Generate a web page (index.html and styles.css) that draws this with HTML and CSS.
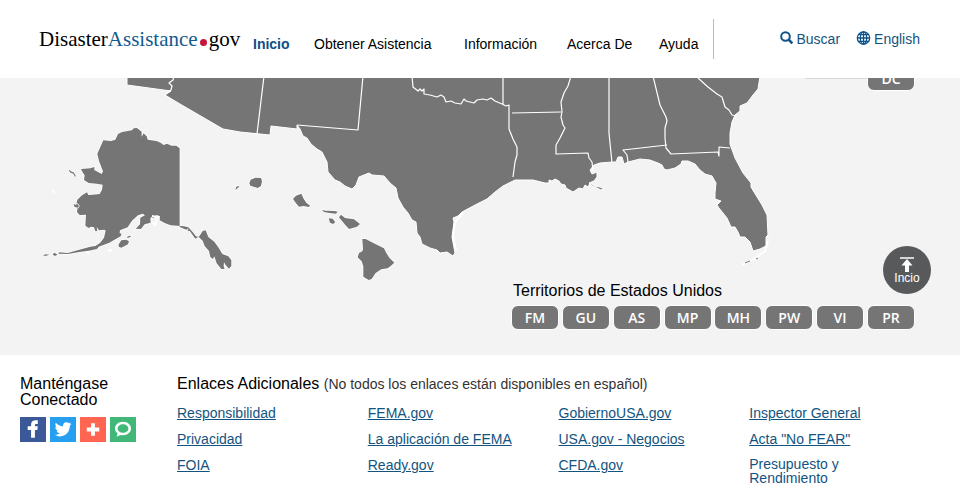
FILE: index.html
```html
<!DOCTYPE html>
<html lang="es">
<head>
<meta charset="utf-8">
<meta name="viewport" content="width=device-width, initial-scale=1">
<title>DisasterAssistance.gov</title>
<link rel="stylesheet" href="styles.css">
</head>
<body>
<header class="site-header">
  <a class="logo" href="#">Disaster<span class="logo-accent">Assistance</span><span class="logo-dot"></span>gov</a>
  <nav class="main-nav">
    <a class="current" href="#">Inicio</a>
    <a href="#">Obtener Asistencia</a>
    <a href="#">Información</a>
    <a href="#">Acerca De</a>
    <a href="#">Ayuda</a>
  </nav>
  <div class="tools">
    <a href="#"><svg width="14" height="14" viewBox="0 0 14 14"><circle cx="5.5" cy="5.5" r="4.3" fill="none" stroke="currentColor" stroke-width="2"/><path d="M8.7 8.7l3.6 3.6" stroke="currentColor" stroke-width="2.6"/></svg>Buscar</a>
    <a href="#"><svg width="15" height="14" viewBox="0 0 15 14"><g fill="none" stroke="currentColor" stroke-width="1.3"><circle cx="7.5" cy="7" r="6.2"/><ellipse cx="7.5" cy="7" rx="3.2" ry="6.2"/><path d="M7.5 .8v12.4M1.3 7h12.4M2.3 3.7h10.4M2.3 10.3h10.4"/></g></svg>English</a>
  </div>
</header>

<main class="map">
  <svg class="map-art" viewBox="0 78 960 277" role="img" aria-label="Mapa">
    <g class="land">
      <path d="M127 70V85L171 91 165 95 180 104 223 129 240 132 270 135 271 126 297 129 297 125 300 129 303 136 307 138 311 144 317 149 322 152 327 162 328 172 335 180 340 182 345 186 352 189 356 185 359 177 364 175 369 173 372 175 384 176 390 183 396 188 398 198 403 207 408 213 412 220 416 222 417 233 420 237 422 244 430 248 437 250 440 253 447 252 453 256 455 253 452 237 454 222 453 218 458 216 462 212 477 204 487 199 495 192 503 186 515 180 533 180 545 183 549 183 549 180 552 181 555 179 559 181 561 184 565 185 566 188 573 192 579 188 583 189 585 185 588 187 590 183 594 186 600 187 604 189 601 190 597 188 592 186 589 183 594 181 597 177 597 172 592 174 590 170 594 165 600 163 612 162 616 162 618 157 622 157 624 164 628 162 640 159 650 160 658 163 662 165 664 169 667 170 675 168 681 164 682 161 688 161 695 164 700 170 705 174 712 176 716 183 715 193 715 199 721 201 717 205 719 208 727 218 731 227 735 227 738 232 740 237 745 237 750 242 753 251 760 249 766 246 766 237 768 235 767 215 762 205 754 192 751 187 751 183 743 173 735 158 730 144 730 133 732 122 735 115 740 111 740 106 747 103 753 95 758 89 761 70Z"/>
      <g transform="translate(30 120) scale(.3333)">
        <path d="M220 61l23 2 13-4 8-17 12-6 30-5 5-6 10-1 14 11v15l6-10 10 10 2 9 27 4 13 6 8 6 10-4 14 6h14l10 8v236l20 8 6-4-2 9 6-2 17 24 12-7 10-16 9-2 8 20 18 14 12 17 12 20 18 7 9 11v18l-7 8-10-11-5-8-1 12 3 8h-10l-14-17-7-21-4 8-8-6-4-18-13-15-6-16-12-11-8-2-10-13-13-14-13-3-40-3-18-7-15-8 1-12-10-4-9 9-7-3-3 5 1 12-18 5-11 14-16-1 13-13 1-20 14-7-7-5-14 5-18 16-13 20-23 9-1 9 6 1-3 8-34 19-32 12-5 7-25 5-28 4-35 6-28-1 2-4 26 2 43-12 25-7 15-2 14-9 12-16 5-21-4-3-16 2-7-10 2 12-6 1-4-12-9-2-7 4-10-7 2-33-19 1-8-9 2-15-5-5 4-17 14-13 15-9 4 8 13-1 21-2 7-13 2-15-18-3-24-2-14-9 2-14-7-11-4-8 28-2 12-4v9l22 12 4-8-7-18-5-13-5-22z"/>
        <path d="M266 373l8-12 15-2 8 5-3 9-10 5-10 5-8-3zM290 352l8-5 6 2-10 5zM130 253l8 1 3-3 6 6-3 6-10-2zM117 149l8 6 6 2 7 12-3 1-5-9-8-3-5-5zM38 407l8-4 13 1-10 3zM68 403l5-5 10 6-9 4z"/>
      </g>
      <g transform="translate(220 160) scale(.3333)">
        <path d="M88 70l4-11 14-6 17 1 3 10-3 14-10 6-22-7zM46 90l3-10 10-3-6 8zM219 117l9-10 16-6 7 15 8 12 11 9-3 4-16-3-14 2-10-12zM305 150l12 2 26 1 10 2-5 6-20-2-16-3zM326 175l12 1 8 11-7 5-9-4zM357 172l6-8 12 10 27 4 18 14-9 8-24 7-13-14zM427 237l10 0 23 12 32 16 7 14 9 14 15 15-10 9-10 8-19 3-17 11-12 18-9 3-16-10v-31l-5-15-12-12 4-13 10-5 2-7z"/>
      </g>
    </g>
    <g class="shore">
      <path d="M463 213l-8 9-2 14 3 14M768 241l-3 10-11 8-12 6M53 190l1 3M86 252l4 1M108 251l4-1M152 216l6 1-3 8-3-3"/>
    </g>
    <path class="keys" d="M745 263l5-2M756 259l2-1"/>
    <g class="borders">
      <path d="M174 76l-1 4-4 3 3 3-1 4-4 3M264 76l-7 58M363 76l-5 54-61-5M412 76l1 11 5 4 2-2 2 2 2-2v5l6 1 7 2 4-2 3 2 2 5 5-1 4 2 6 1 3-5 2 2 8 2 3-3 6-1 4 1 4-2 4 3 7 3 4 2 3-1v24l4 10 4 8v8l-2 7-2 15M503 76v29M512 113l49-1M571 76l-3 10-4 7-3 9 1 10-1 5 2 8 2 3-5 10-4 7v9l32-1 1 5 3 4 1 9M609 76v57l3 30M628 162l-1-7-4-5 44-5M653 76l7 29 6 12 1 4-2 7v10l1 10 5 6 47-2 1 4v-9l11 1M698 78l10 9 9 7 5 3 3 10 4 3 3 5 4 1"/>
    </g>
    <path class="leader" d="M805 78h63"/>
  </svg>
  <button class="state-pill dc" type="button">DC</button>
  <a class="to-top" href="#"><svg width="16" height="16" viewBox="0 0 16 16"><path d="M1 1h14" stroke="currentColor" stroke-width="1.5"/><path d="M8 2l5.5 6.5H10V15H6V8.5H2.5z" fill="currentColor"/></svg>Incio</a>
  <section class="territories">
    <h2>Territorios de Estados Unidos</h2>
    <div class="pill-row">
      <button class="state-pill" type="button">FM</button>
      <button class="state-pill" type="button">GU</button>
      <button class="state-pill" type="button">AS</button>
      <button class="state-pill" type="button">MP</button>
      <button class="state-pill" type="button">MH</button>
      <button class="state-pill" type="button">PW</button>
      <button class="state-pill" type="button">VI</button>
      <button class="state-pill" type="button">PR</button>
    </div>
  </section>
</main>

<footer class="site-footer">
  <section class="connect">
    <h2>Manténgase Conectado</h2>
    <div class="social">
      <a class="facebook" href="#" aria-label="Facebook"><svg viewBox="0 0 26 26"><path d="M11 21.500v-8H7.500v-4H11V8c0-3.200 2-4.500 5-4.500h2V7.300h-1.500c-1.200 0-1.500.5-1.500 1.500v.7h3l-.5 4H15v8z"/></svg></a>
      <a class="twitter" href="#" aria-label="Twitter"><svg viewBox="0 0 26 26"><path d="M4.500 18.300c2 .2 3.700-.3 5.200-1.500-1.700-.1-2.900-1-3.400-2.500h1.500C6 13.700 5 12.300 5 10.500l1.600.4C5 9.600 4.600 7.700 5.600 6c2 2.300 4.400 3.600 7.500 3.800C12.600 7.200 14.300 5.500 16.500 5.500c1.100 0 2 .4 2.700 1.100l2.300-.9-1.600 2 2.100-.5-1.900 2c.1 6-4.300 11-10.100 11-2 0-4-.6-5.500-1.900z"/></svg></a>
      <a class="share" href="#" aria-label="Compartir"><svg viewBox="0 0 26 26"><path d="M11 6.500h4V11h4.500v4H15v4.500h-4V15H6.500v-4H11z"/></svg></a>
      <a class="chat" href="#" aria-label="Comentarios"><svg viewBox="0 0 26 26"><path fill-rule="evenodd" d="M13 5c4.700 0 8.300 3 8.300 7s-3.600 7-8.300 7c-1 0-2-.1-2.800-.4L6.500 20.500l.8-3.500c-1.700-1.200-2.600-3-2.600-5 0-4 3.600-7 8.300-7zm0 2.500c-3.200 0-5.600 2-5.600 4.500s2.400 4.500 5.600 4.500 5.600-2 5.600-4.500-2.400-4.500-5.600-4.500z"/></svg></a>
    </div>
  </section>
  <section class="links">
    <h2>Enlaces Adicionales <small>(No todos los enlaces están disponibles en español)</small></h2>
    <ul>
      <li><a href="#">Responsibilidad</a></li>
      <li><a href="#">FEMA.gov</a></li>
      <li><a href="#">GobiernoUSA.gov</a></li>
      <li><a href="#">Inspector General</a></li>
      <li><a href="#">Privacidad</a></li>
      <li><a href="#">La aplicación de FEMA</a></li>
      <li><a href="#">USA.gov - Negocios</a></li>
      <li><a href="#">Acta "No FEAR"</a></li>
      <li><a href="#">FOIA</a></li>
      <li><a href="#">Ready.gov</a></li>
      <li><a href="#">CFDA.gov</a></li>
      <li><a class="plain" href="#">Presupuesto y<br>Rendimiento</a></li>
    </ul>
  </section>
</footer>
</body>
</html>
```

FILE: styles.css
```css
* {
  box-sizing: border-box;
}

body {
  margin: 0;
  background: #fff;
  color: #000;
  font: 14px/16px "Liberation Sans", Arial, sans-serif;
}

h2 {
  margin: 0;
  font-size: 16px;
  font-weight: 400;
}

a {
  color: #12547f;
  text-decoration: none;
}

.site-header {
  display: flex;
  align-items: flex-start;
  padding: 19px 40px 19px 39px;
  background: #fff;
  position: relative;
  z-index: 1;
}

.logo {
  width: 214px;
  padding-top: 8px;
  color: #000;
  font: 21px/24px "Liberation Serif", "Times New Roman", serif;
  white-space: nowrap;
}

.logo-accent {
  color: #125a8f;
}

.logo-dot {
  display: inline-block;
  width: 7px;
  height: 7px;
  margin: 0 2px;
  border-radius: 50%;
  background: #c8143c;
}

.main-nav {
  display: grid;
  grid-template-columns: 61px 150px 103px 92px 54px;
  height: 40px;
  padding-top: 17px;
  border-right: 1px solid #bbb;
  white-space: nowrap;
}

.main-nav a {
  color: #000;
}

.main-nav .current {
  color: #0f4f84;
  font-weight: 700;
}

.tools {
  display: flex;
  gap: 16px;
  margin-left: auto;
  padding-top: 12px;
}

.tools a {
  display: flex;
  gap: 3px;
}

.tools svg {
  color: #0f5488;
}

.map {
  position: relative;
  overflow: hidden;
  background: #f3f3f3;
}

.map-art {
  display: block;
  width: 100%;
}

.land {
  fill: #757575;
  stroke: #fff;
  stroke-width: 1;
  stroke-linejoin: round;
}

.land g {
  stroke-width: 4;
  paint-order: stroke;
}

.shore {
  fill: none;
  stroke: #fff;
  stroke-width: 2;
}

.keys {
  stroke: #757575;
}

.borders {
  fill: none;
  stroke: #fff;
  stroke-width: 1.2;
  stroke-linejoin: round;
}

.leader {
  stroke: #bbb;
}

.state-pill {
  width: 48px;
  height: 25px;
  padding: 0;
  border: 1px solid #fff;
  border-radius: 7px;
  background: #757575;
  color: #fff;
  font: 600 14px/21px "Open Sans", sans-serif;
}

.dc {
  position: absolute;
  top: -12px;
  right: 45px;
}

.territories {
  position: absolute;
  right: 45px;
  bottom: 25px;
  width: 404px;
}

.territories h2 {
  padding: 0 2px 5px;
  line-height: 18px;
}

.pill-row {
  display: flex;
  justify-content: space-between;
}

.to-top {
  position: absolute;
  right: 29px;
  bottom: 61px;
  display: flex;
  flex-direction: column;
  align-items: center;
  width: 48px;
  height: 48px;
  padding-top: 11px;
  border-radius: 50%;
  background: #58595b;
  color: #fff;
  font-size: 12px;
  line-height: 10px;
}

.site-footer {
  display: flex;
  padding: 21px 20px 0;
}

.connect {
  width: 157px;
}

.connect h2 {
  width: 100px;
}

.social {
  display: flex;
  gap: 4px;
  padding-top: 9px;
}

.social a {
  width: 26px;
  height: 25px;
}

.social svg {
  display: block;
  width: 26px;
  height: 25px;
  fill: #fff;
}

.facebook {
  background: #3b5998;
}

.twitter {
  background: #279ff0;
}

.share {
  background: #ff6550;
}

.chat {
  background: #41b878;
}

.links {
  flex: 1;
}

.links small {
  color: #333;
  font-size: 14px;
}

.links ul {
  display: grid;
  grid-template-columns: repeat(4, 1fr);
  row-gap: 10px;
  margin: 0;
  padding: 13px 0 0;
  list-style: none;
}

.links li a {
  display: inline-block;
  line-height: 14px;
  text-decoration: underline;
}

.links li .plain {
  text-decoration: none;
}
```
